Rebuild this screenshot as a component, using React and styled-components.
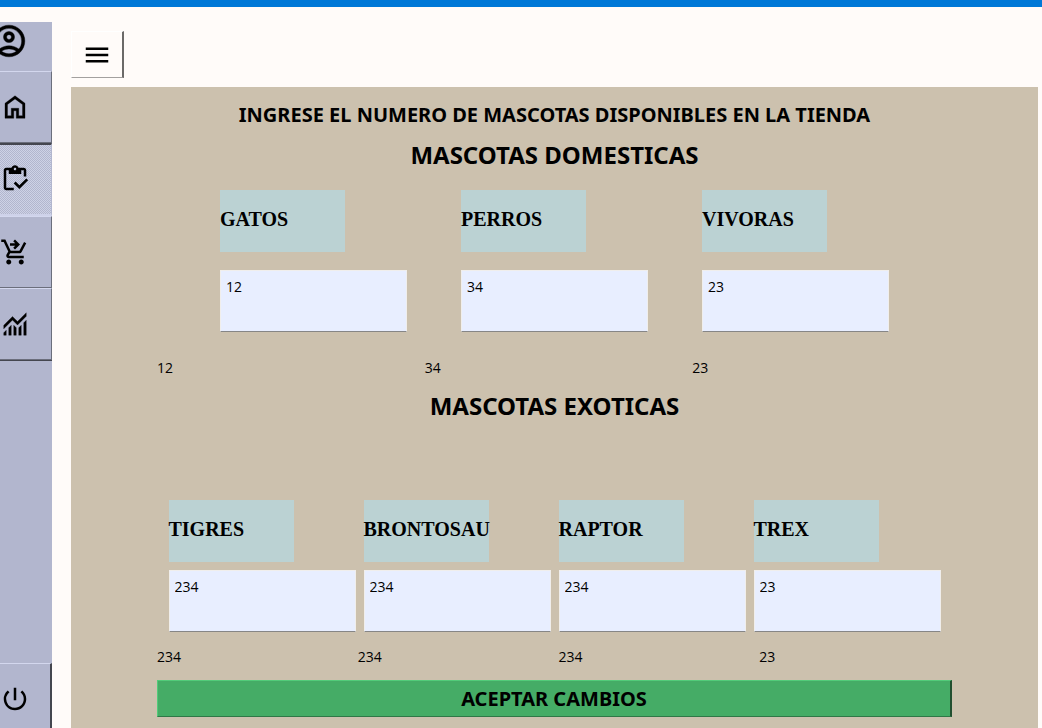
import React from 'react';
import styled, { createGlobalStyle, css } from 'styled-components';
import {
  MdMenu,
  MdOutlineInventory,
  MdOutlineShoppingCartCheckout,
  MdPowerSettingsNew,
} from 'react-icons/md';

const GlobalStyle = createGlobalStyle`
  *, *::before, *::after { box-sizing: border-box; }
  body {
    margin: 0;
    background: #fffbf9;
    color: #000;
    font-family: 'Segoe UI', 'Open Sans', sans-serif;
    font-size: 14px;
  }
`;

const headingFont = "'Segoe UI', 'Noto Sans', sans-serif";

const Page = styled.div`
  height: 100vh;
  overflow: hidden;
  display: flex;
  flex-direction: column;
`;

const TitleStrip = styled.div`
  flex: none;
  height: 7px;
  background: #0078d7;
`;

const Body = styled.div`
  flex: 1;
  min-height: 0;
  display: flex;
  gap: 19px;
  padding: 15px 4px 0 0;
`;

const Sidebar = styled.nav`
  flex: none;
  width: 52px;
  display: flex;
  flex-direction: column;
  background: #b2b6ce;
  overflow: hidden;
`;

const Profile = styled.div`
  flex: none;
  height: 49px;
  margin-left: -10px;
  svg { display: block; width: 38px; height: 38px; }
`;

const NavButton = styled.button`
  flex: none;
  height: 72px;
  padding: 0;
  display: flex;
  align-items: center;
  color: #000;
  background: #b2b6ce;
  border: solid;
  border-width: 1px 1px 1px 0;
  border-color: #d3d7ee #6b6e7c #6b6e7c;
  box-shadow: 0 1px 0 #44464f;
  svg { width: 30px; height: 30px; }
  ${(p) => p.$active && css`
    height: 73px;
    padding-bottom: 2px;
    border-width: 2px 1px 2px 0;
    border-color: #44464f #b2b6ce #ced2ea;
    background: repeating-conic-gradient(#b2b6ce 0 25%, #ced2e6 0 50%) 0 0 / 2px 2px;
    box-shadow: none;
  `}
  ${(p) => p.$last && css`
    margin-top: auto;
    height: 65px;
    padding-top: 6px;
    border-width: 1px 2px 0 0;
    border-right-color: #44464f;
  `}
`;

const Main = styled.main`
  flex: 1;
  min-width: 0;
  display: flex;
  flex-direction: column;
`;

const MenuButton = styled.button`
  flex: none;
  width: 53px;
  height: 47px;
  margin: 9px 0;
  padding: 0;
  display: grid;
  place-items: center;
  color: #000;
  background: #fffbf9;
  border: solid;
  border-width: 1px 2px 1px 1px;
  border-color: #fff #6b6968 #a3a09f #fff;
  svg { width: 30px; height: 30px; }
`;

const Panel = styled.form`
  flex: 1;
  padding: 14px 86px 0;
  display: flex;
  flex-direction: column;
  background: #ccc1ae;
`;

const Title = styled.h1`
  margin: 0;
  font: bold 20px/28px ${headingFont};
  text-align: center;
`;

const Heading = styled.h2`
  margin: 0;
  font: bold 24px/34px ${headingFont};
  text-align: center;
`;

const FieldRow = styled.div`
  display: flex;
  justify-content: center;
  gap: ${(p) => p.$gap}px;
`;

const Field = styled.div`
  flex: 0 1 187px;
  display: flex;
  flex-direction: column;
  gap: ${(p) => p.$gap}px;
`;

const Label = styled.label`
  width: 125px;
  height: 62px;
  padding-bottom: 3px;
  display: flex;
  align-items: center;
  background: #bbd2d3;
  font: bold 20px 'Liberation Serif', serif;
`;

const NumberInput = styled.input`
  width: 100%;
  height: 62px;
  padding: 0 5px 30px;
  border: 1px solid #f0eeec;
  border-bottom-color: #868686;
  border-radius: 0;
  background: #e8eeff;
  color: #000;
  font: inherit;
`;

const Values = styled.div`
  display: grid;
  grid-template-columns: repeat(${(p) => p.$columns}, 1fr);
  gap: 8px;
  line-height: 22px;
`;

const Group = styled.section`
  display: flex;
  flex-direction: column;
  padding-top: ${(p) => p.$top}px;
`;

const PetGroup = styled.div`
  display: flex;
  flex-direction: column;
  margin-top: ${(p) => p.$top}px;
  gap: ${(p) => p.$gap}px;
`;

const Accept = styled.button`
  height: 37px;
  margin-top: 12px;
  padding: 0;
  border: solid;
  border-width: 1px 2px 1px 1px;
  border-color: #52cb79 #214f30 #2f7847 #52cb79;
  background: #45ac66;
  color: #000;
  font: bold 20px ${headingFont};
`;

const Symbol = ({ d }) => (
  <svg
    viewBox="0 -960 960 960"
    fill="currentColor"
    stroke="currentColor"
    strokeWidth="10"
    aria-hidden="true"
  >
    <path d={d} />
  </svg>
);

const ACCOUNT =
  'M234-276q51-39 114-61.5T480-360q69 0 132 22.5T726-276q35-41 54.5-93T800-480q0-133-93.5-226.5T480-800q-133 0-226.5 93.5T160-480q0 59 19.5 111t54.5 93Zm246-164q-59 0-99.5-40.5T340-580q0-59 40.5-99.5T480-720q59 0 99.5 40.5T620-580q0 59-40.5 99.5T480-440Zm0 360q-83 0-156-31.5T197-197q-54-54-85.5-127T80-480q0-83 31.5-156T197-763q54-54 127-85.5T480-880q83 0 156 31.5T763-763q54 54 85.5 127T880-480q0 83-31.5 156T763-197q-54 54-127 85.5T480-80Zm0-80q53 0 100-15.5t86-44.5q-39-29-86-44.5T480-280q-53 0-100 15.5T294-220q39 29 86 44.5T480-160Zm0-360q26 0 43-17t17-43q0-26-17-43t-43-17q-26 0-43 17t-17 43q0 26 17 43t43 17Z';
const HOME =
  'M240-200h120v-240h240v240h120v-360L480-740 240-560v360Zm-80 80v-480l320-240 320 240v480H520v-240h-80v240H160Z';
const MONITORING =
  'M120-120v-80l80-80v160h-80Zm160 0v-240l80-80v320h-80Zm160 0v-320l80 81v239h-80Zm160 0v-239l80-80v319h-80Zm160 0v-400l80-80v480h-80ZM120-327v-113l280-280 160 160 280-280v113L560-447 400-607 120-327Z';

const DOMESTIC = [
  ['GATOS', '12'],
  ['PERROS', '34'],
  ['VIVORAS', '23'],
];
const EXOTIC = [
  ['TIGRES', '234'],
  ['BRONTOSAU', '234'],
  ['RAPTOR', '234'],
  ['TREX', '23'],
];

const PetFields = ({ pets, columnGap, rowGap }) => (
  <FieldRow $gap={columnGap}>
    {pets.map(([name, count]) => (
      <Field key={name} $gap={rowGap}>
        <Label htmlFor={name}>{name}</Label>
        <NumberInput id={name} defaultValue={count} />
      </Field>
    ))}
  </FieldRow>
);

const PetValues = ({ pets }) => (
  <Values $columns={pets.length}>
    {pets.map(([name, count]) => (
      <span key={name}>{count}</span>
    ))}
  </Values>
);

export default function App() {
  return (
    <Page>
      <GlobalStyle />
      <TitleStrip />
      <Body>
        <Sidebar>
          <Profile><Symbol d={ACCOUNT} /></Profile>
          <NavButton aria-label="Inicio"><Symbol d={HOME} /></NavButton>
          <NavButton aria-label="Inventario" $active><MdOutlineInventory /></NavButton>
          <NavButton aria-label="Ventas"><MdOutlineShoppingCartCheckout /></NavButton>
          <NavButton aria-label="Reportes"><Symbol d={MONITORING} /></NavButton>
          <NavButton aria-label="Salir" $last><MdPowerSettingsNew /></NavButton>
        </Sidebar>
        <Main>
          <MenuButton aria-label="Menu"><MdMenu /></MenuButton>
          <Panel onSubmit={(e) => e.preventDefault()}>
            <Title>INGRESE EL NUMERO DE MASCOTAS DISPONIBLES EN LA TIENDA</Title>
            <Group $top={9}>
              <Heading>MASCOTAS DOMESTICAS</Heading>
              <PetGroup $top={18} $gap={25}>
                <PetFields pets={DOMESTIC} columnGap={54} rowGap={18} />
                <PetValues pets={DOMESTIC} />
              </PetGroup>
            </Group>
            <Group $top={10}>
              <Heading>MASCOTAS EXOTICAS</Heading>
              <PetGroup $top={77} $gap={14}>
                <PetFields pets={EXOTIC} columnGap={8} rowGap={8} />
                <PetValues pets={EXOTIC} />
              </PetGroup>
            </Group>
            <Accept type="submit">ACEPTAR CAMBIOS</Accept>
          </Panel>
        </Main>
      </Body>
    </Page>
  );
}
